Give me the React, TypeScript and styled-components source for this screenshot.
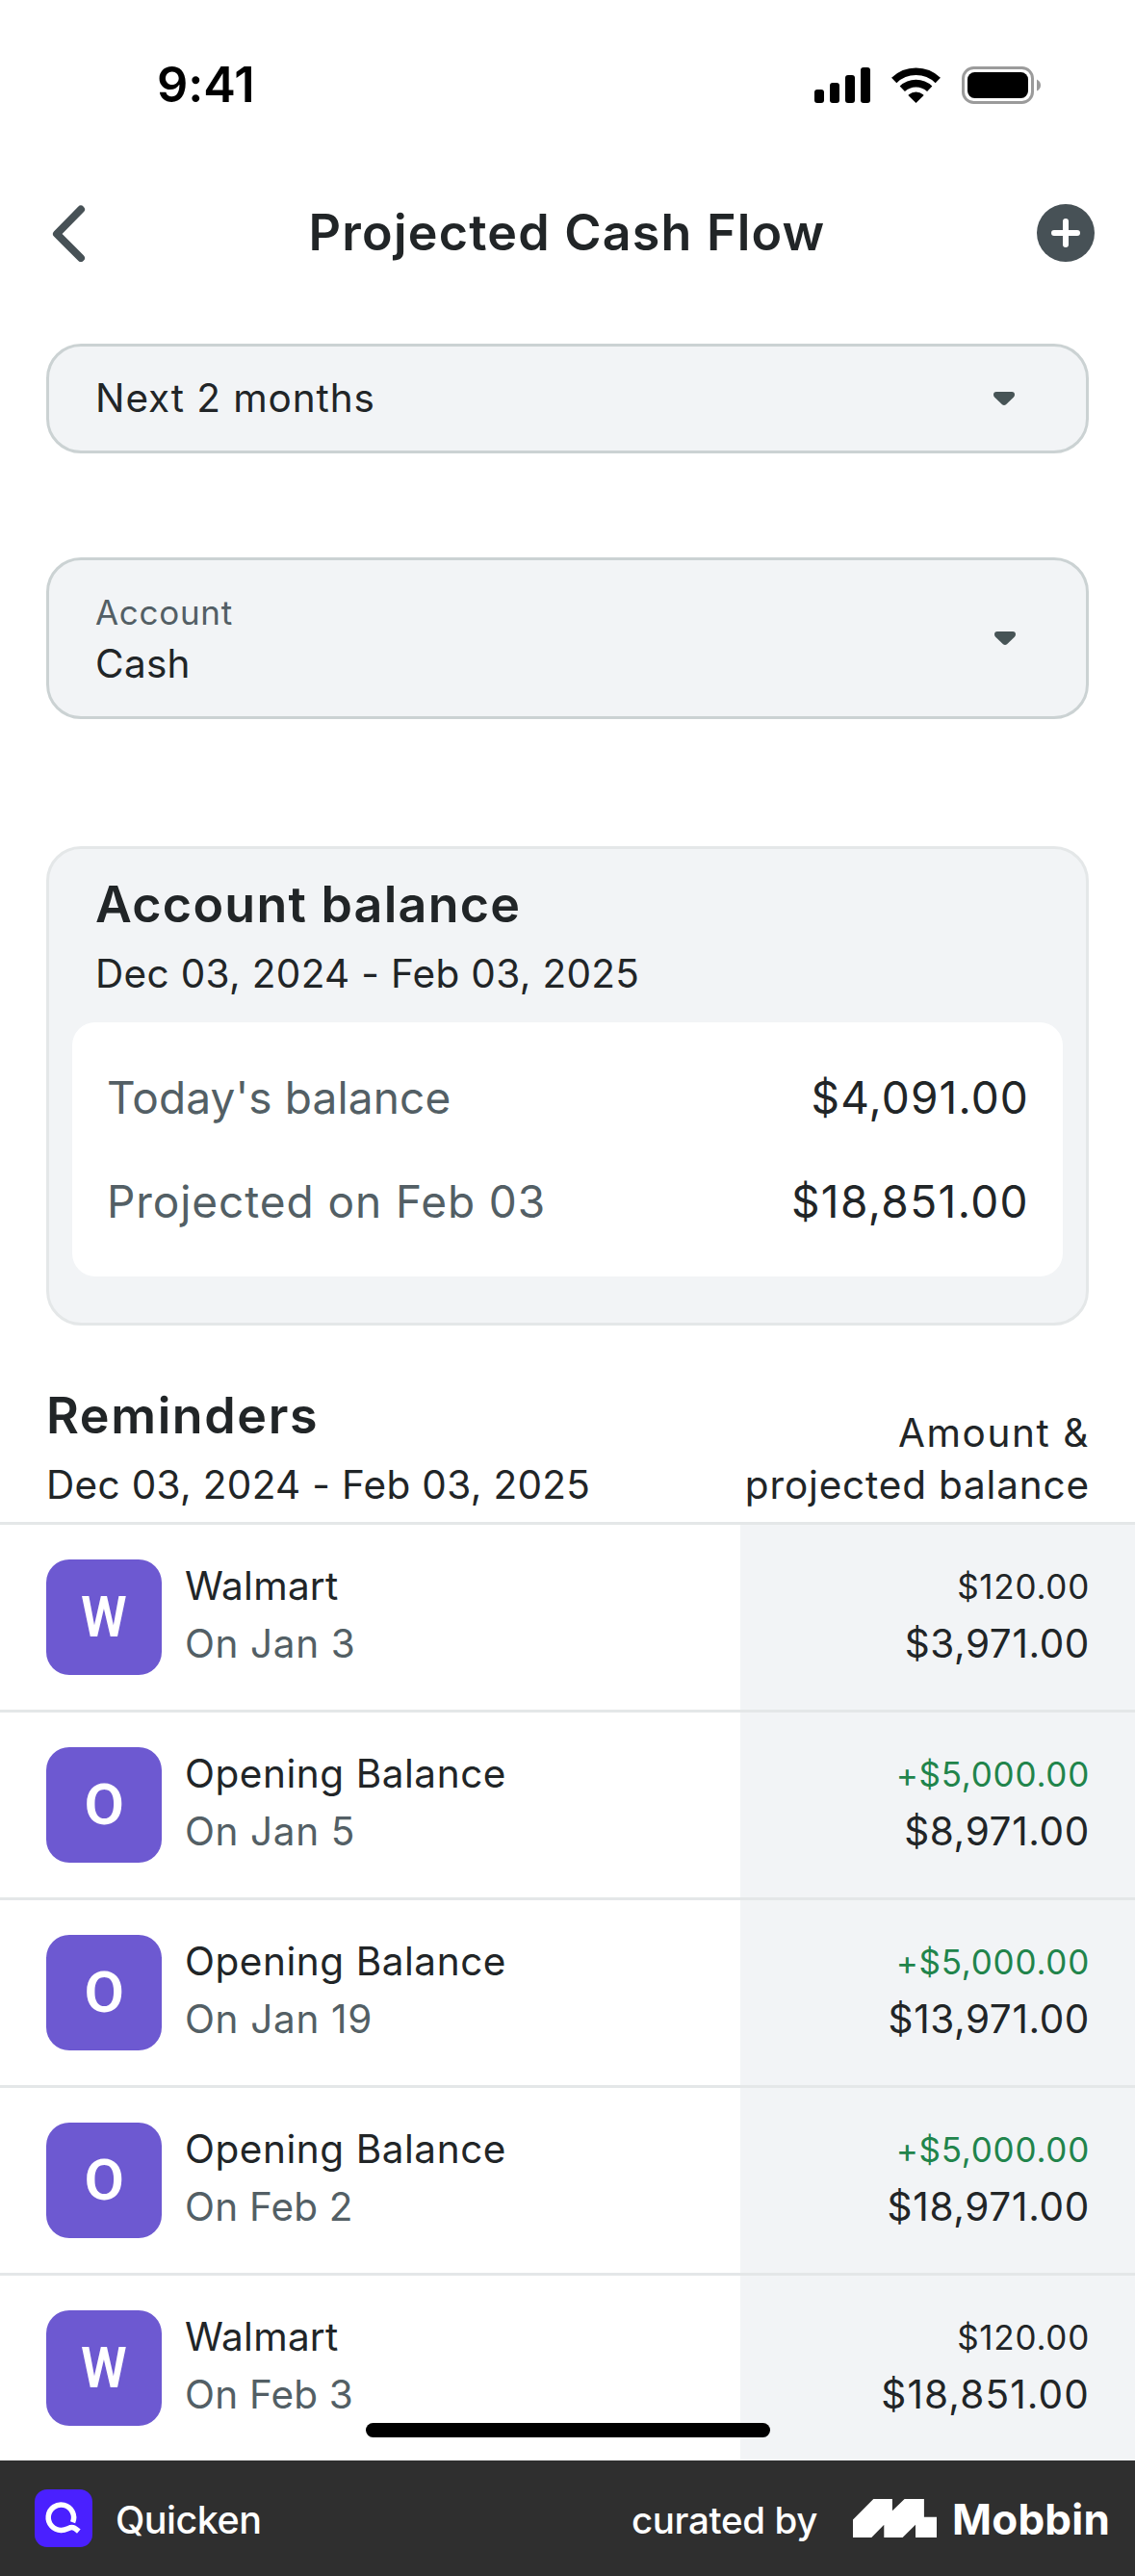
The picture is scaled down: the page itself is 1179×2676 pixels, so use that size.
import React from "react";
import styled, { createGlobalStyle } from "styled-components";

const color = {
  ink: "#212527",
  muted: "#535f65",
  slate: "#475156",
  surface: "#f2f4f6",
  line: "#e4e7e8",
  outline: "#cbd2d3",
  green: "#21844b",
  purple: "#6d59d1",
  footer: "#2f2f2f",
};

const GlobalStyle = createGlobalStyle`
  * { box-sizing: border-box; }
  body { margin: 0; background: #fff; }
  svg { display: block; flex: none; }
`;

const Screen = styled.div`
  width: 1179px;
  height: 2676px;
  display: flex;
  flex-direction: column;
  background: #fff;
  color: ${color.ink};
  font-family: Inter, Roboto, "Liberation Sans", sans-serif;
  font-size: 40.5px;
  line-height: 54px;
  white-space: nowrap;
  overflow: hidden;
`;

const Text = styled.span<{ $track?: number; $tone?: string; $size?: number }>`
  display: block;
  letter-spacing: ${(p) => p.$track ?? 0}px;
  color: ${(p) => p.$tone ?? "inherit"};
  ${(p) => (p.$size ? `font-size: ${p.$size}px;` : "")}
`;

const Heading = styled.h2<{ $track?: number }>`
  margin: 0;
  font-size: 52px;
  font-weight: 600;
  line-height: 64px;
  letter-spacing: ${(p) => p.$track ?? 1.25}px;
`;

const StatusBar = styled.div`
  height: 176px;
  padding: 0 98px 0 163px;
  display: flex;
  align-items: center;
`;

const Clock = styled.div`
  flex: 1;
  color: #000;
  font-size: 50.5px;
  font-weight: 600;
  letter-spacing: -0.1px;
`;

const StatusIcons = styled.div`
  display: flex;
  align-items: center;
`;

const WifiSlot = styled.div`
  margin: 0 22px;
`;

const NavBar = styled.header`
  height: 132px;
  padding: 0 42px 0 51px;
  display: grid;
  grid-template-columns: 1fr auto 1fr;
  align-items: center;
`;

const NavTitle = styled(Heading).attrs({ as: "h1" })`
  padding-right: 10px;
`;

const IconButton = styled.button<{ $end?: boolean }>`
  padding: 0;
  border: 0;
  background: none;
  justify-self: ${(p) => (p.$end ? "end" : "start")};
`;

const Body = styled.main`
  padding: 49px 48px 0;
`;

const Select = styled.div<{ $height: number; $gap?: number; $right: number }>`
  height: ${(p) => p.$height}px;
  margin-top: ${(p) => p.$gap ?? 0}px;
  padding: 0 ${(p) => p.$right}px 0 48px;
  display: flex;
  align-items: center;
  justify-content: space-between;
  background: ${color.surface};
  border: 3px solid ${color.outline};
  border-radius: 36px;
`;

const Card = styled.section`
  height: 498px;
  margin-top: 132px;
  padding: 26px 24px 0;
  background: ${color.surface};
  border: 3px solid ${color.line};
  border-radius: 36px;
`;

const CardHead = styled.div`
  display: grid;
  gap: 13px;
  padding-left: 24px;
`;

const Panel = styled.div`
  height: 264px;
  margin-top: 23px;
  padding: 24px 35px 24px 36px;
  display: grid;
  grid-template-rows: 1fr 1fr;
  background: #fff;
  border-radius: 24px;
  font-size: 46px;
`;

const PanelRow = styled.div`
  display: flex;
  align-items: center;
  justify-content: space-between;
`;

const ListHead = styled.div`
  margin-top: 62px;
  padding: 0 47px 11px 48px;
  display: flex;
  align-items: flex-end;
  justify-content: space-between;
`;

const ListTitle = styled.div`
  display: grid;
  gap: 13px;
`;

const ListCaption = styled.div`
  display: grid;
  justify-items: end;
`;

const Row = styled.div`
  height: 195px;
  border-top: 3px solid ${color.line};
  display: flex;
  line-height: 60px;
`;

const RowMain = styled.div`
  flex: 1;
  padding-left: 48px;
  display: flex;
  align-items: center;
  gap: 24px;
`;

const Avatar = styled.div`
  width: 120px;
  height: 120px;
  border-radius: 24px;
  display: grid;
  place-items: center;
  background: ${color.purple};
  color: #fff;
  font-family: Roboto, sans-serif;
  font-size: 59px;
  font-weight: 600;
`;

const Initial = styled.span<{ $squeeze: boolean }>`
  transform: scaleX(${(p) => (p.$squeeze ? 0.92 : 1.02)});
`;

const Lines = styled.div`
  padding-bottom: 5px;
`;

const RowAmounts = styled.div`
  width: 410px;
  padding: 0 47px 5px 0;
  display: flex;
  flex-direction: column;
  align-items: flex-end;
  justify-content: center;
  background: ${color.surface};
`;

const HomeIndicator = styled.div`
  position: absolute;
  left: 380px;
  bottom: 24px;
  width: 420px;
  height: 15px;
  border-radius: 8px;
  background: #000;
`;

const List = styled.div`
  position: relative;
`;

const Footer = styled.footer`
  height: 120px;
  padding: 0 26px 0 36px;
  display: flex;
  align-items: center;
  background: ${color.footer};
  color: #fff;
`;

const AppName = styled.div`
  flex: 1;
  padding: 3px 0 0 24px;
  font-size: 39.5px;
  font-weight: 500;
  letter-spacing: -0.5px;
`;

const Curated = styled.div`
  padding: 3px 37px 0 0;
  font-size: 38.5px;
  font-weight: 500;
  letter-spacing: -0.35px;
`;

const Brand = styled.div`
  padding: 1px 0 0 16px;
  font-size: 44px;
  font-weight: 700;
  letter-spacing: 0.2px;
`;

const Signal = () => (
  <svg width="58" height="37" viewBox="0 0 58 37">
    <rect x="0" y="23" width="10" height="14" rx="3" />
    <rect x="16" y="16" width="10" height="21" rx="3" />
    <rect x="32" y="8" width="10" height="29" rx="3" />
    <rect x="48" y="0" width="10" height="37" rx="3" />
  </svg>
);

const Wifi = () => (
  <svg width="51" height="37" viewBox="0 0 51 37">
    <g fill="none" stroke="#000" strokeWidth="7.6">
      <path d="M2.7 13.4A32.8 32.8 0 0 1 48.3 13.4" />
      <path d="M11.3 22.3A20.5 20.5 0 0 1 39.7 22.3" />
    </g>
    <path d="M25.5 37L17.6 29.2Q17.4 28.6 18 28.2A12 12 0 0 1 33 28.2Q33.6 28.6 33.4 29.2Z" />
  </svg>
);

const Battery = () => (
  <svg width="82" height="39" viewBox="0 0 82 39">
    <rect x="1.5" y="1.5" width="72" height="36" rx="11" fill="none" stroke="#9b9b9b" strokeWidth="3" />
    <rect x="6" y="6" width="63" height="27" rx="7.5" />
    <path d="M78 13.5Q82 15.5 82 19.5Q82 23.5 78 25.5Z" fill="#9b9b9b" />
  </svg>
);

const Back = () => (
  <svg width="40" height="60" viewBox="0 0 40 60">
    <path d="M33 5.5L8 31L33 56" fill="none" stroke={color.slate} strokeWidth="8" strokeLinecap="round" strokeLinejoin="round" />
  </svg>
);

const Add = () => (
  <svg width="60" height="60" viewBox="0 0 60 60">
    <circle cx="30" cy="30" r="30" fill={color.slate} />
    <path d="M30 18V42M18 30H42" stroke="#fff" strokeWidth="6" strokeLinecap="round" />
  </svg>
);

const Caret = () => (
  <svg width="22" height="14" viewBox="0 0 22 14">
    <path d="M3 0H19Q22 0 22 3Q22 4.600 20.800 5.800L13 13.200Q11 14.800 9 13.200L1.200 5.800Q0 4.600 0 3Q0 0 3 0Z" fill="#475456" />
  </svg>
);

const QuickenLogo = () => (
  <svg width="60" height="60" viewBox="0 0 60 60">
    <rect width="60" height="60" rx="13" fill="#4a20ff" />
    <path
      d="M39.600 34.200A13.200 13.200 0 1 0 27.800 42.400C33 42.400 35.500 39.600 38.700 39.600C41.500 39.600 43.200 41.300 45.800 43.600"
      fill="none"
      stroke="#fff"
      strokeWidth="5.500"
    />
  </svg>
);

const MobbinLogo = () => (
  <svg width="87" height="40" viewBox="0 0 87 40">
    <path d="M0 40V21.500L21.300 0H40.900V12.200L53.600 0H73.900V18.700H87V40H65V26.700L51.600 40H32.300V26.700L19.300 40Z" fill="#fff" />
  </svg>
);

type Reminder = {
  name: string;
  nameTrack: number;
  date: string;
  dateTrack: number;
  amount: string;
  credit?: boolean;
  balance: string;
  balanceTrack: number;
};

const reminders: Reminder[] = [
  { name: "Walmart", nameTrack: 0.25, date: "On Jan 3", dateTrack: 0.6, amount: "$120.00", balance: "$3,971.00", balanceTrack: 0.6 },
  { name: "Opening Balance", nameTrack: 0.55, date: "On Jan 5", dateTrack: 0.6, amount: "+$5,000.00", credit: true, balance: "$8,971.00", balanceTrack: 0.65 },
  { name: "Opening Balance", nameTrack: 0.55, date: "On Jan 19", dateTrack: 0.65, amount: "+$5,000.00", credit: true, balance: "$13,971.00", balanceTrack: 0.6 },
  { name: "Opening Balance", nameTrack: 0.55, date: "On Feb 2", dateTrack: 0.2, amount: "+$5,000.00", credit: true, balance: "$18,971.00", balanceTrack: 0.7 },
  { name: "Walmart", nameTrack: 0.25, date: "On Feb 3", dateTrack: 0.2, amount: "$120.00", balance: "$18,851.00", balanceTrack: 1.15 },
];

const period = "Dec 03, 2024 - Feb 03, 2025";

export default function App() {
  return (
    <Screen>
      <GlobalStyle />
      <StatusBar>
        <Clock>9:41</Clock>
        <StatusIcons>
          <Signal />
          <WifiSlot>
            <Wifi />
          </WifiSlot>
          <Battery />
        </StatusIcons>
      </StatusBar>

      <NavBar>
        <IconButton aria-label="Back">
          <Back />
        </IconButton>
        <NavTitle $track={1.21}>Projected Cash Flow</NavTitle>
        <IconButton $end aria-label="Add">
          <Add />
        </IconButton>
      </NavBar>

      <Body>
        <Select $height={114} $right={74}>
          <Text $track={0.9}>Next 2 months</Text>
          <Caret />
        </Select>

        <Select $height={168} $gap={108} $right={73}>
          <div>
            <Text $size={35} $track={0.7} $tone={color.muted}>
              Account
            </Text>
            <Text $track={0.3}>Cash</Text>
          </div>
          <Caret />
        </Select>

        <Card>
          <CardHead>
            <Heading>Account balance</Heading>
            <Text $track={0.33}>{period}</Text>
          </CardHead>
          <Panel>
            <PanelRow>
              <Text $track={0.12} $tone={color.muted}>
                Today's balance
              </Text>
              <Text $track={1.15}>$4,091.00</Text>
            </PanelRow>
            <PanelRow>
              <Text $track={0.92} $tone={color.muted}>
                Projected on Feb 03
              </Text>
              <Text $track={1.4}>$18,851.00</Text>
            </PanelRow>
          </Panel>
        </Card>
      </Body>

      <ListHead>
        <ListTitle>
          <Heading $track={1.6}>Reminders</Heading>
          <Text $track={0.33}>{period}</Text>
        </ListTitle>
        <ListCaption>
          <Text $track={1.6}>Amount &amp;</Text>
          <Text $track={0.83}>projected balance</Text>
        </ListCaption>
      </ListHead>

      <List>
        {reminders.map((r, i) => (
          <Row key={i}>
            <RowMain>
              <Avatar>
                <Initial $squeeze={r.name[0] === "W"}>{r.name[0]}</Initial>
              </Avatar>
              <Lines>
                <Text $track={r.nameTrack}>{r.name}</Text>
                <Text $track={r.dateTrack} $tone={color.muted}>
                  {r.date}
                </Text>
              </Lines>
            </RowMain>
            <RowAmounts>
              <Text $size={35} $track={0.75} $tone={r.credit ? color.green : color.ink}>
                {r.amount}
              </Text>
              <Text $track={r.balanceTrack}>{r.balance}</Text>
            </RowAmounts>
          </Row>
        ))}
        <HomeIndicator />
      </List>

      <Footer>
        <QuickenLogo />
        <AppName>Quicken</AppName>
        <Curated>curated by</Curated>
        <MobbinLogo />
        <Brand>Mobbin</Brand>
      </Footer>
    </Screen>
  );
}
